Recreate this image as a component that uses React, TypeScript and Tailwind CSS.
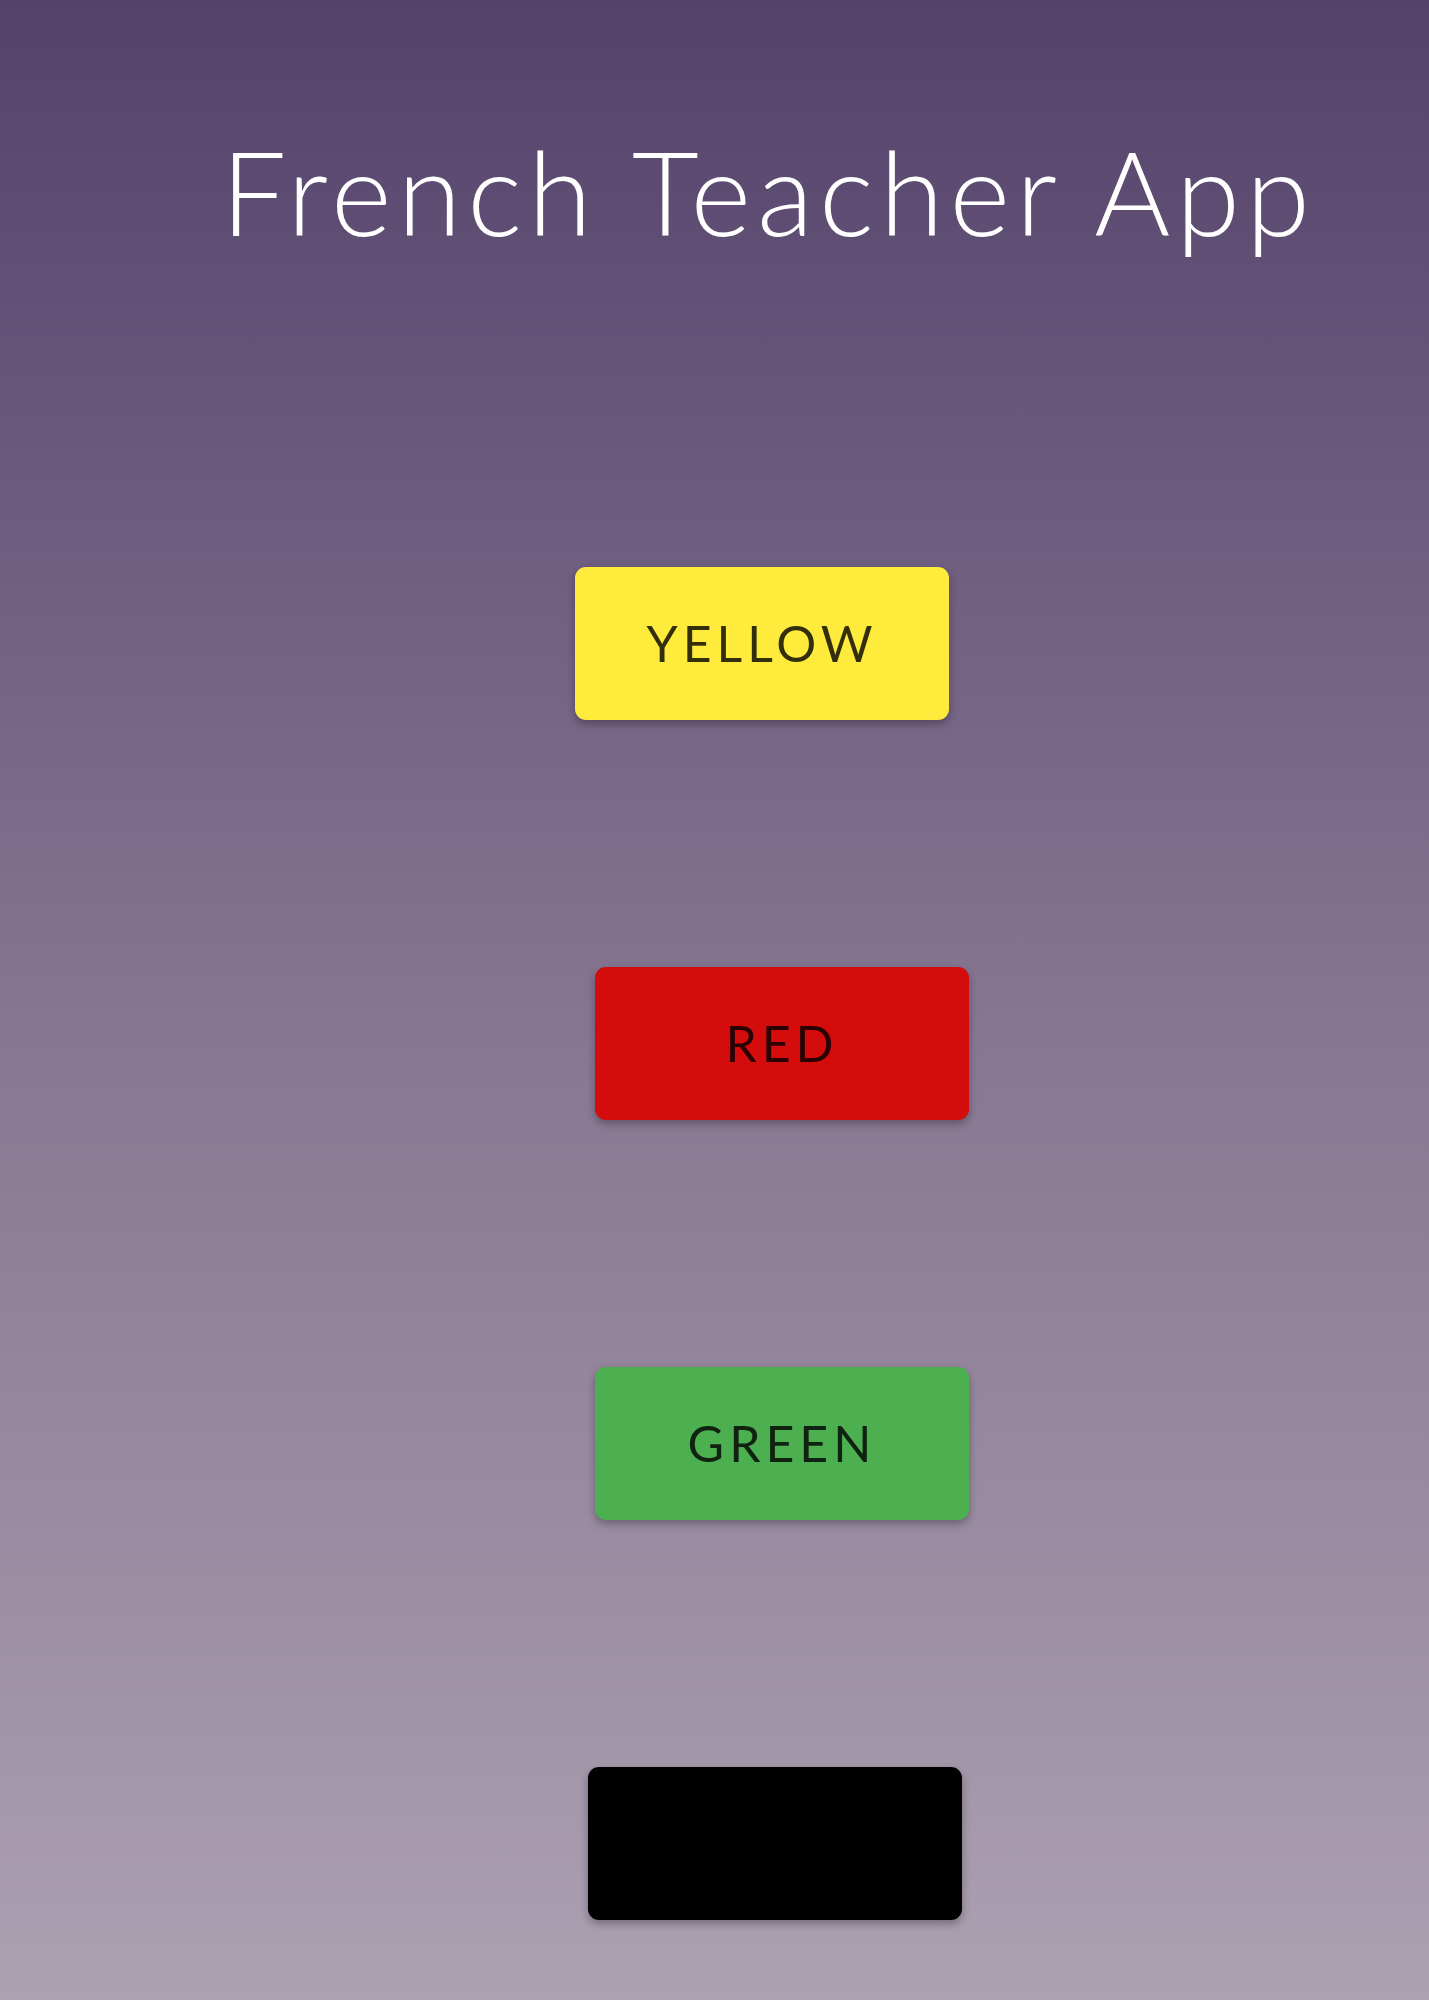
import React from 'react';

type ColorButtonProps = {
  label?: string;
  className: string;
};

const ColorButton: React.FC<ColorButtonProps> = ({ label, className }) => (
  <button
    className={`w-[374px] h-[153px] rounded-[11px] shadow-[0_4px_8px_rgba(0,0,0,0.3)] flex items-center justify-center text-[50px] tracking-[0.1em] text-black/80 ${className}`}
    style={{ fontFamily: '"Lato", "Noto Sans", sans-serif' }}
  >
    {label}
  </button>
);

export default function App() {
  return (
    <div className="w-[1429px] h-[2000px] bg-gradient-to-b from-[#54426b] via-[#857591] to-[#aca1b1] overflow-hidden">
      <h1
        className="pt-[134px] pl-[221px] text-white font-light text-[116px] leading-none tracking-[6px] whitespace-nowrap"
        style={{ fontFamily: '"Lato", "Noto Sans", sans-serif' }}
      >
        French Teacher App
      </h1>

      <div className="flex flex-col items-start gap-[247px] mt-[317px]">
        <ColorButton label="YELLOW" className="ml-[575px] bg-[#ffeb3b]" />
        <ColorButton label="RED" className="ml-[595px] bg-[#d40c0c]" />
        <ColorButton label="GREEN" className="ml-[595px] bg-[#4caf50]" />
        <ColorButton className="ml-[588px] bg-black" />
      </div>
    </div>
  );
}
